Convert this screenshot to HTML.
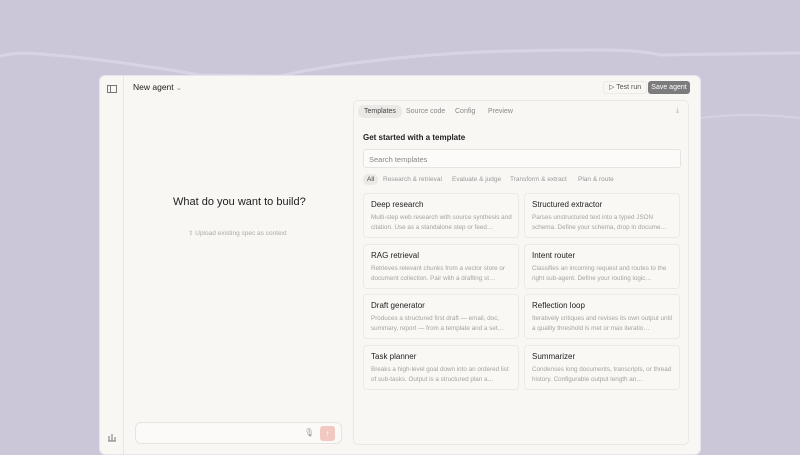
<!DOCTYPE html>
<html><head><style>
*{margin:0;padding:0;box-sizing:border-box}
body{width:800px;height:450px;overflow:hidden;background:#cbc7d9;font-family:"Liberation Sans",sans-serif;position:relative}
.win{position:absolute;left:99px;top:75px;width:602px;height:380px;background:#f8f7f4;border-radius:6px;border:1px solid #e6e4ec}
.side{position:absolute;left:0;top:0;width:24px;height:100%;border-right:1px solid #e8e6e1}
.t{position:absolute;white-space:nowrap}
.panel{position:absolute;left:253px;top:24px;width:336px;height:345px;border:1px solid #ebe9e4;border-radius:5px}
.card{position:absolute;width:156px;height:45px;border:1px solid #eceae5;border-radius:4px;background:#f9f8f5}
.card b{position:absolute;left:7px;top:6px;font-weight:normal;font-size:8px;color:#222}
.card p{position:absolute;left:7px;top:19px;font-size:6.3px;line-height:10px;color:#a5a39e;width:142px;height:20px;overflow:hidden}
</style></head><body>
<svg style="position:absolute;left:0;top:0" width="800" height="150"><path d="M0 56 Q15 53 25 53 Q60 55 100 60 Q150 66 200 75 L280 76 Q330 65 380 60 Q420 55 480 52 Q540 50 600 50 Q640 50 660 55 L800 53" stroke="#d8d4e3" stroke-width="3" fill="none"/><path d="M700 118 Q750 112 800 118" stroke="#d6d2e2" stroke-width="2" fill="none"/></svg>
<div class="win">
<div class="side">
<svg style="position:absolute;left:7px;top:9px" width="10" height="9"><rect x=".5" y=".5" width="9" height="7" fill="none" stroke="#777" stroke-width="1"/><line x1="3.5" y1="1" x2="3.5" y2="8" stroke="#777"/></svg>
<svg style="position:absolute;left:7px;top:356px" width="10" height="10"><path d="M1 9h8M2 9V4M5 9V2M8 9V5" stroke="#777" fill="none"/></svg>
</div>
<div class="t" style="left:33px;top:6px;font-size:8.5px;color:#222">New agent <span style="color:#888;font-size:7px">⌄</span></div>
<div class="t" style="left:73px;top:120px;font-size:11px;color:#1e1e1e">What do you want to build?</div>
<div class="t" style="left:88px;top:153px;font-size:6.5px;color:#aaa">⇪ Upload existing spec as context</div>
<div style="position:absolute;left:35px;top:346px;width:207px;height:22px;border:1px solid #e6e4df;border-radius:6px;background:#fbfaf8"></div>
<div class="t" style="left:204px;top:352px;font-size:8px;color:#999">🎙</div>
<div style="position:absolute;left:220px;top:350px;width:15px;height:15px;border-radius:3px;background:#f2c9c2;color:#fff;font-size:8px;text-align:center;line-height:15px">↑</div>
<div class="t" style="left:503px;top:5px;height:13px;padding:0 5px;border:1px solid #eceae5;border-radius:3px;font-size:7px;line-height:12px;color:#555">▷ Test run</div>
<div class="t" style="left:548px;top:5px;height:13px;width:42px;background:#7c7c7c;border-radius:3px;font-size:7px;line-height:13px;color:#fff;text-align:center">Save agent</div>
<div class="panel">
<div class="t" style="left:4px;top:4px;padding:0 6px;height:13px;background:#ebe9e5;border-radius:6px;font-size:7px;line-height:13px;color:#444">Templates</div>
<div class="t" style="left:52px;top:7px;font-size:7px;color:#888">Source code</div>
<div class="t" style="left:101px;top:7px;font-size:7px;color:#888">Config</div>
<div class="t" style="left:134px;top:7px;font-size:7px;color:#888">Preview</div>
<div class="t" style="left:322px;top:6px;font-size:7px;color:#aaa">⤓</div>
<div class="t" style="left:9px;top:32px;font-size:8px;color:#222;font-weight:bold">Get started with a template</div>
<div style="position:absolute;left:9px;top:48px;width:318px;height:19px;border:1px solid #e6e4df;border-radius:3px;background:#fcfbf9;font-size:7.5px;color:#888;padding:5px 5px">Search templates</div>
<div class="t" style="left:9px;top:73px;padding:0 4px;height:11px;background:#ebe9e5;border-radius:5px;font-size:6.5px;line-height:11px;color:#444">All</div>
<div class="t" style="left:29px;top:75px;font-size:6.5px;color:#999">Research &amp; retrieval</div>
<div class="t" style="left:98px;top:75px;font-size:6.5px;color:#999">Evaluate &amp; judge</div>
<div class="t" style="left:156px;top:75px;font-size:6.5px;color:#999">Transform &amp; extract</div>
<div class="t" style="left:224px;top:75px;font-size:6.5px;color:#999">Plan &amp; route</div>
<div class="card" style="left:9px;top:92px"><b>Deep research</b><p>Multi-step web research with source synthesis and citation. Use as a standalone step or feed…</p></div>
<div class="card" style="left:170px;top:92px"><b>Structured extractor</b><p>Parses unstructured text into a typed JSON schema. Define your schema, drop in docume…</p></div>
<div class="card" style="left:9px;top:143px"><b>RAG retrieval</b><p>Retrieves relevant chunks from a vector store or document collection. Pair with a drafting st…</p></div>
<div class="card" style="left:170px;top:143px"><b>Intent router</b><p>Classifies an incoming request and routes to the right sub-agent. Define your routing logic…</p></div>
<div class="card" style="left:9px;top:193px"><b>Draft generator</b><p>Produces a structured first draft — email, doc, summary, report — from a template and a set…</p></div>
<div class="card" style="left:170px;top:193px"><b>Reflection loop</b><p>Iteratively critiques and revises its own output until a quality threshold is met or max iteratio…</p></div>
<div class="card" style="left:9px;top:244px"><b>Task planner</b><p>Breaks a high-level goal down into an ordered list of sub-tasks. Output is a structured plan a…</p></div>
<div class="card" style="left:170px;top:244px"><b>Summarizer</b><p>Condenses long documents, transcripts, or thread history. Configurable output length an…</p></div>
</div>
</div>
</body></html>
